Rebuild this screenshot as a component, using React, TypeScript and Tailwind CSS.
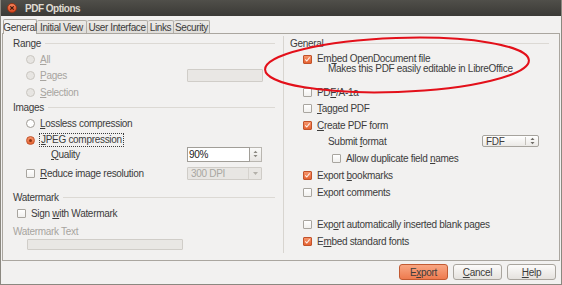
import React from 'react'

function Check({ on = false }: { on?: boolean }) {
  return on ? (
    <span className="w-[9px] h-[9px] shrink-0 rounded-[1px] border border-[#c2522a] bg-gradient-to-b from-[#f6946a] to-[#e5622f] flex items-center justify-center">
      <svg width="9" height="9" viewBox="0 0 9 9">
        <path d="M1.6 4.3 L3.6 6.4 L7.3 1.8" stroke="#fff1ea" strokeWidth="1.4" fill="none" />
      </svg>
    </span>
  ) : (
    <span className="w-[9px] h-[9px] shrink-0 rounded-[1px] border border-[#a8a59f] bg-gradient-to-b from-white to-[#f1f0ee]" />
  )
}

function Radio({ state }: { state: 'disabled' | 'off' | 'on' }) {
  if (state === 'on')
    return (
      <span className="w-[9px] h-[9px] shrink-0 rounded-full border border-[#c2522a] bg-gradient-to-b from-[#f6946a] to-[#e5622f] flex items-center justify-center">
        <span className="w-[3px] h-[3px] rounded-full bg-[#8a3415]" />
      </span>
    )
  if (state === 'off')
    return <span className="w-[9px] h-[9px] shrink-0 rounded-full border border-[#9f9b95] bg-white" />
  return <span className="w-[9px] h-[9px] shrink-0 rounded-full border border-[#c9c6c0] bg-[#e7e5e2]" />
}

function Label({ text, pl, pr }: { text: string; pl: string; pr: string }) {
  return (
    <div className={`h-[14px] flex items-center ${pl} ${pr}`}>
      <span>{text}</span>
      <span className="flex-1 h-px bg-[#dcd9d4] ml-[4px]" />
    </div>
  )
}

function UpDown({ color = '#6f6c66' }: { color?: string }) {
  return (
    <svg width="5" height="8" viewBox="0 0 5 8">
      <path d="M0.5 3 L2.5 0.8 L4.5 3 Z" fill={color} />
      <path d="M0.5 5 L2.5 7.2 L4.5 5 Z" fill={color} />
    </svg>
  )
}

export default function App() {
  return (
    <div className="w-[562px] h-[285px] bg-[#f2f1f0] flex flex-col relative overflow-hidden border-x border-b border-[#8b8880] font-['Liberation_Sans',Arial,sans-serif] text-[10px] tracking-[-0.3px] text-[#3c3c3c]">
      {/* title bar */}
      <div className="h-[16px] shrink-0 bg-gradient-to-b from-[#504f4a] to-[#3b3a36] flex items-center pl-[6px]">
        <span className="w-[10px] h-[10px] rounded-full bg-gradient-to-b from-[#f5825a] to-[#d9461c] border border-[#9c3414] flex items-center justify-center">
          <svg width="6" height="6" viewBox="0 0 6 6">
            <path d="M1.3 1.3 L4.7 4.7 M4.7 1.3 L1.3 4.7" stroke="#3b1a0d" strokeWidth="1.1" />
          </svg>
        </span>
        <span className="ml-[8px] font-bold text-[#dfdbd2] tracking-[-0.5px]">PDF Options</span>
      </div>

      {/* tabs */}
      <div className="mt-[3px] h-[14px] shrink-0 flex items-end pl-[2px]">
        <div className="w-[34px] h-[15px] mb-[-1px] relative z-10 border border-b-0 border-[#aaa69f] bg-[#f2f1f0] rounded-t-[2px] flex items-center justify-center">
          General
        </div>
        {[
          ['Initial View', 'w-[50px]'],
          ['User Interface', 'w-[61px]'],
          ['Links', 'w-[26px]'],
          ['Security', 'w-[36px]'],
        ].map(([t, w]) => (
          <div
            key={t}
            className={`${w} h-[13px] border border-b-0 border-l-0 border-[#b3afa8] bg-gradient-to-b from-[#eceae7] to-[#dfddd9] rounded-t-[2px] flex items-center justify-center whitespace-nowrap tracking-[-0.4px]`}
          >
            {t}
          </div>
        ))}
      </div>

      {/* panel */}
      <div className="mx-[1px] h-[228px] shrink-0 border border-[#aaa69f] flex">
        {/* left column */}
        <div className="w-[280px] pt-[2px] flex flex-col">
          <Label text="Range" pl="pl-[10px]" pr="pr-[8px]" />
          <div className="mt-[2px] h-[14px] flex items-center pl-[23px] text-[#a7a49f]">
            <Radio state="disabled" />
            <span className="ml-[5px]"><u>A</u>ll</span>
          </div>
          <div className="mt-[2px] h-[14px] flex items-center justify-between pl-[23px] pr-[20px] text-[#a7a49f]">
            <div className="flex items-center">
              <Radio state="disabled" />
              <span className="ml-[5px]"><u>P</u>ages</span>
            </div>
            <span className="w-[76px] h-[13px] border border-[#d0cdc8] bg-[#e9e7e4] rounded-[1px]" />
          </div>
          <div className="mt-[3px] h-[14px] flex items-center pl-[23px] text-[#a7a49f]">
            <Radio state="disabled" />
            <span className="ml-[5px]"><u>S</u>election</span>
          </div>
          <div className="mt-[1px]">
            <Label text="Images" pl="pl-[10px]" pr="pr-[8px]" />
          </div>
          <div className="mt-[2px] h-[14px] flex items-center pl-[23px]">
            <Radio state="off" />
            <span className="ml-[5px]"><u>L</u>ossless compression</span>
          </div>
          <div className="mt-[3px] h-[14px] flex items-center pl-[23px]">
            <Radio state="on" />
            <span className="ml-[4px] px-[1px] border border-dotted border-[#3c3c3c] leading-[12px]"><u>J</u>PEG compression</span>
          </div>
          <div className="h-[14px] flex items-center justify-between pl-[48px] pr-[21px]">
            <span><u>Q</u>uality</span>
            <div className="flex h-[15px] w-[75px]">
              <span className="flex-1 border border-[#a19e98] bg-white flex items-center pl-[1px] text-[#222]">90%</span>
              <span className="w-[12px] border border-l-0 border-[#b9b6b0] bg-gradient-to-b from-[#fafaf9] to-[#e8e6e3] flex items-center justify-center">
                <UpDown color="#8a8780" />
              </span>
            </div>
          </div>
          <div className="mt-[5px] h-[14px] flex items-center justify-between pl-[23px] pr-[21px]">
            <div className="flex items-center">
              <Check />
              <span className="ml-[5px]"><u>R</u>educe image resolution</span>
            </div>
            <div className="w-[75px] h-[13px] border border-[#cfccc7] bg-[#e8e6e3] rounded-[1px] flex items-center text-[#a9a6a1]">
              <span className="flex-1 pl-[3px]">300 DPI</span>
              <span className="w-[13px] h-full border-l border-[#d6d3ce] flex items-center justify-center">
                <svg width="5" height="3" viewBox="0 0 5 3">
                  <path d="M0 0 L5 0 L2.5 3 Z" fill="#b3b0aa" />
                </svg>
              </span>
            </div>
          </div>
          <div className="mt-[10px]">
            <Label text="Watermark" pl="pl-[10px]" pr="pr-[8px]" />
          </div>
          <div className="mt-[2px] h-[14px] flex items-center pl-[14px]">
            <Check />
            <span className="ml-[5px]">Sign <u>w</u>ith Watermark</span>
          </div>
          <div className="mt-[4px] h-[14px] flex items-center pl-[10px] text-[#a7a49f]">Watermark Text</div>
          <span className="mt-[1px] ml-[24px] w-[156px] h-[11px] border border-[#d0cdc8] bg-[#e9e7e4] rounded-[1px]" />
        </div>

        {/* right column */}
        <div className="flex-1 mt-[2px] h-[217px] border-l border-[#d8d5d0] flex flex-col">
          <Label text="General" pl="pl-[6px]" pr="pr-[10px]" />
          <div className="mt-[2px] h-[14px] flex items-center pl-[19px]">
            <Check on />
            <span className="ml-[5px] leading-[10px]">Em<u>b</u>ed OpenDocument file</span>
          </div>
          <div className="mt-[-2px] h-[10px] leading-[10px] flex items-center pl-[44px]">Makes this PDF easily editable in LibreOffice</div>
          <div className="mt-[11px] h-[14px] flex items-center pl-[19px]">
            <Check />
            <span className="ml-[5px]">PD<u>F</u>/A-1a</span>
          </div>
          <div className="mt-[2px] h-[14px] flex items-center pl-[19px]">
            <Check />
            <span className="ml-[5px]"><u>T</u>agged PDF</span>
          </div>
          <div className="mt-[3px] h-[14px] flex items-center pl-[19px]">
            <Check on />
            <span className="ml-[5px]"><u>C</u>reate PDF form</span>
          </div>
          <div className="mt-[2px] h-[14px] flex items-center justify-between pl-[44px] pr-[20px]">
            <span>Submit <u>f</u>ormat</span>
            <div className="w-[57px] h-[12px] border border-[#a6a39d] bg-gradient-to-b from-white to-[#ebe9e6] rounded-[2px] flex items-center">
              <span className="flex-1 pl-[3px]">FDF</span>
              <span className="w-[1px] h-[8px] bg-[#c3c0ba]" />
              <span className="w-[12px] flex items-center justify-center">
                <UpDown />
              </span>
            </div>
          </div>
          <div className="mt-[3px] h-[14px] flex items-center pl-[48px]">
            <Check />
            <span className="ml-[5px]">Allow duplicate field <u>n</u>ames</span>
          </div>
          <div className="mt-[3px] h-[14px] flex items-center pl-[19px]">
            <Check on />
            <span className="ml-[5px]">Export <u>b</u>ookmarks</span>
          </div>
          <div className="mt-[3px] h-[14px] flex items-center pl-[19px]">
            <Check />
            <span className="ml-[5px]">Export comments</span>
          </div>
          <div className="mt-[18px] h-[14px] flex items-center pl-[19px]">
            <Check />
            <span className="ml-[5px]">Exp<u>o</u>rt automatically inserted blank pages</span>
          </div>
          <div className="mt-[3px] h-[14px] flex items-center pl-[19px]">
            <Check on />
            <span className="ml-[5px]">E<u>m</u>bed standard fonts</span>
          </div>
        </div>
      </div>

      {/* footer buttons */}
      <div className="mt-[3px] h-[16px] flex justify-end gap-[5px] pr-[5px]">
        <button className="w-[49px] h-[16px] rounded-[3px] border border-[#c25a32] bg-gradient-to-b from-[#f8a682] to-[#ee7a4e] flex items-center justify-center">
          E<u>x</u>port
        </button>
        <button className="w-[49px] h-[16px] rounded-[3px] border border-[#a9a59e] bg-gradient-to-b from-[#fcfbfa] to-[#e5e2de] flex items-center justify-center">
          <u>C</u>ancel
        </button>
        <button className="w-[49px] h-[16px] rounded-[3px] border border-[#a9a59e] bg-gradient-to-b from-[#fcfbfa] to-[#e5e2de] flex items-center justify-center">
          <u>H</u>elp
        </button>
      </div>

      {/* red annotation ellipse */}
      <svg className="absolute inset-0 pointer-events-none" width="562" height="285">
        <ellipse cx="396" cy="65" rx="132" ry="27" transform="rotate(-2 396 65)" stroke="#e3101a" strokeWidth="2" fill="none" />
      </svg>
    </div>
  )
}
